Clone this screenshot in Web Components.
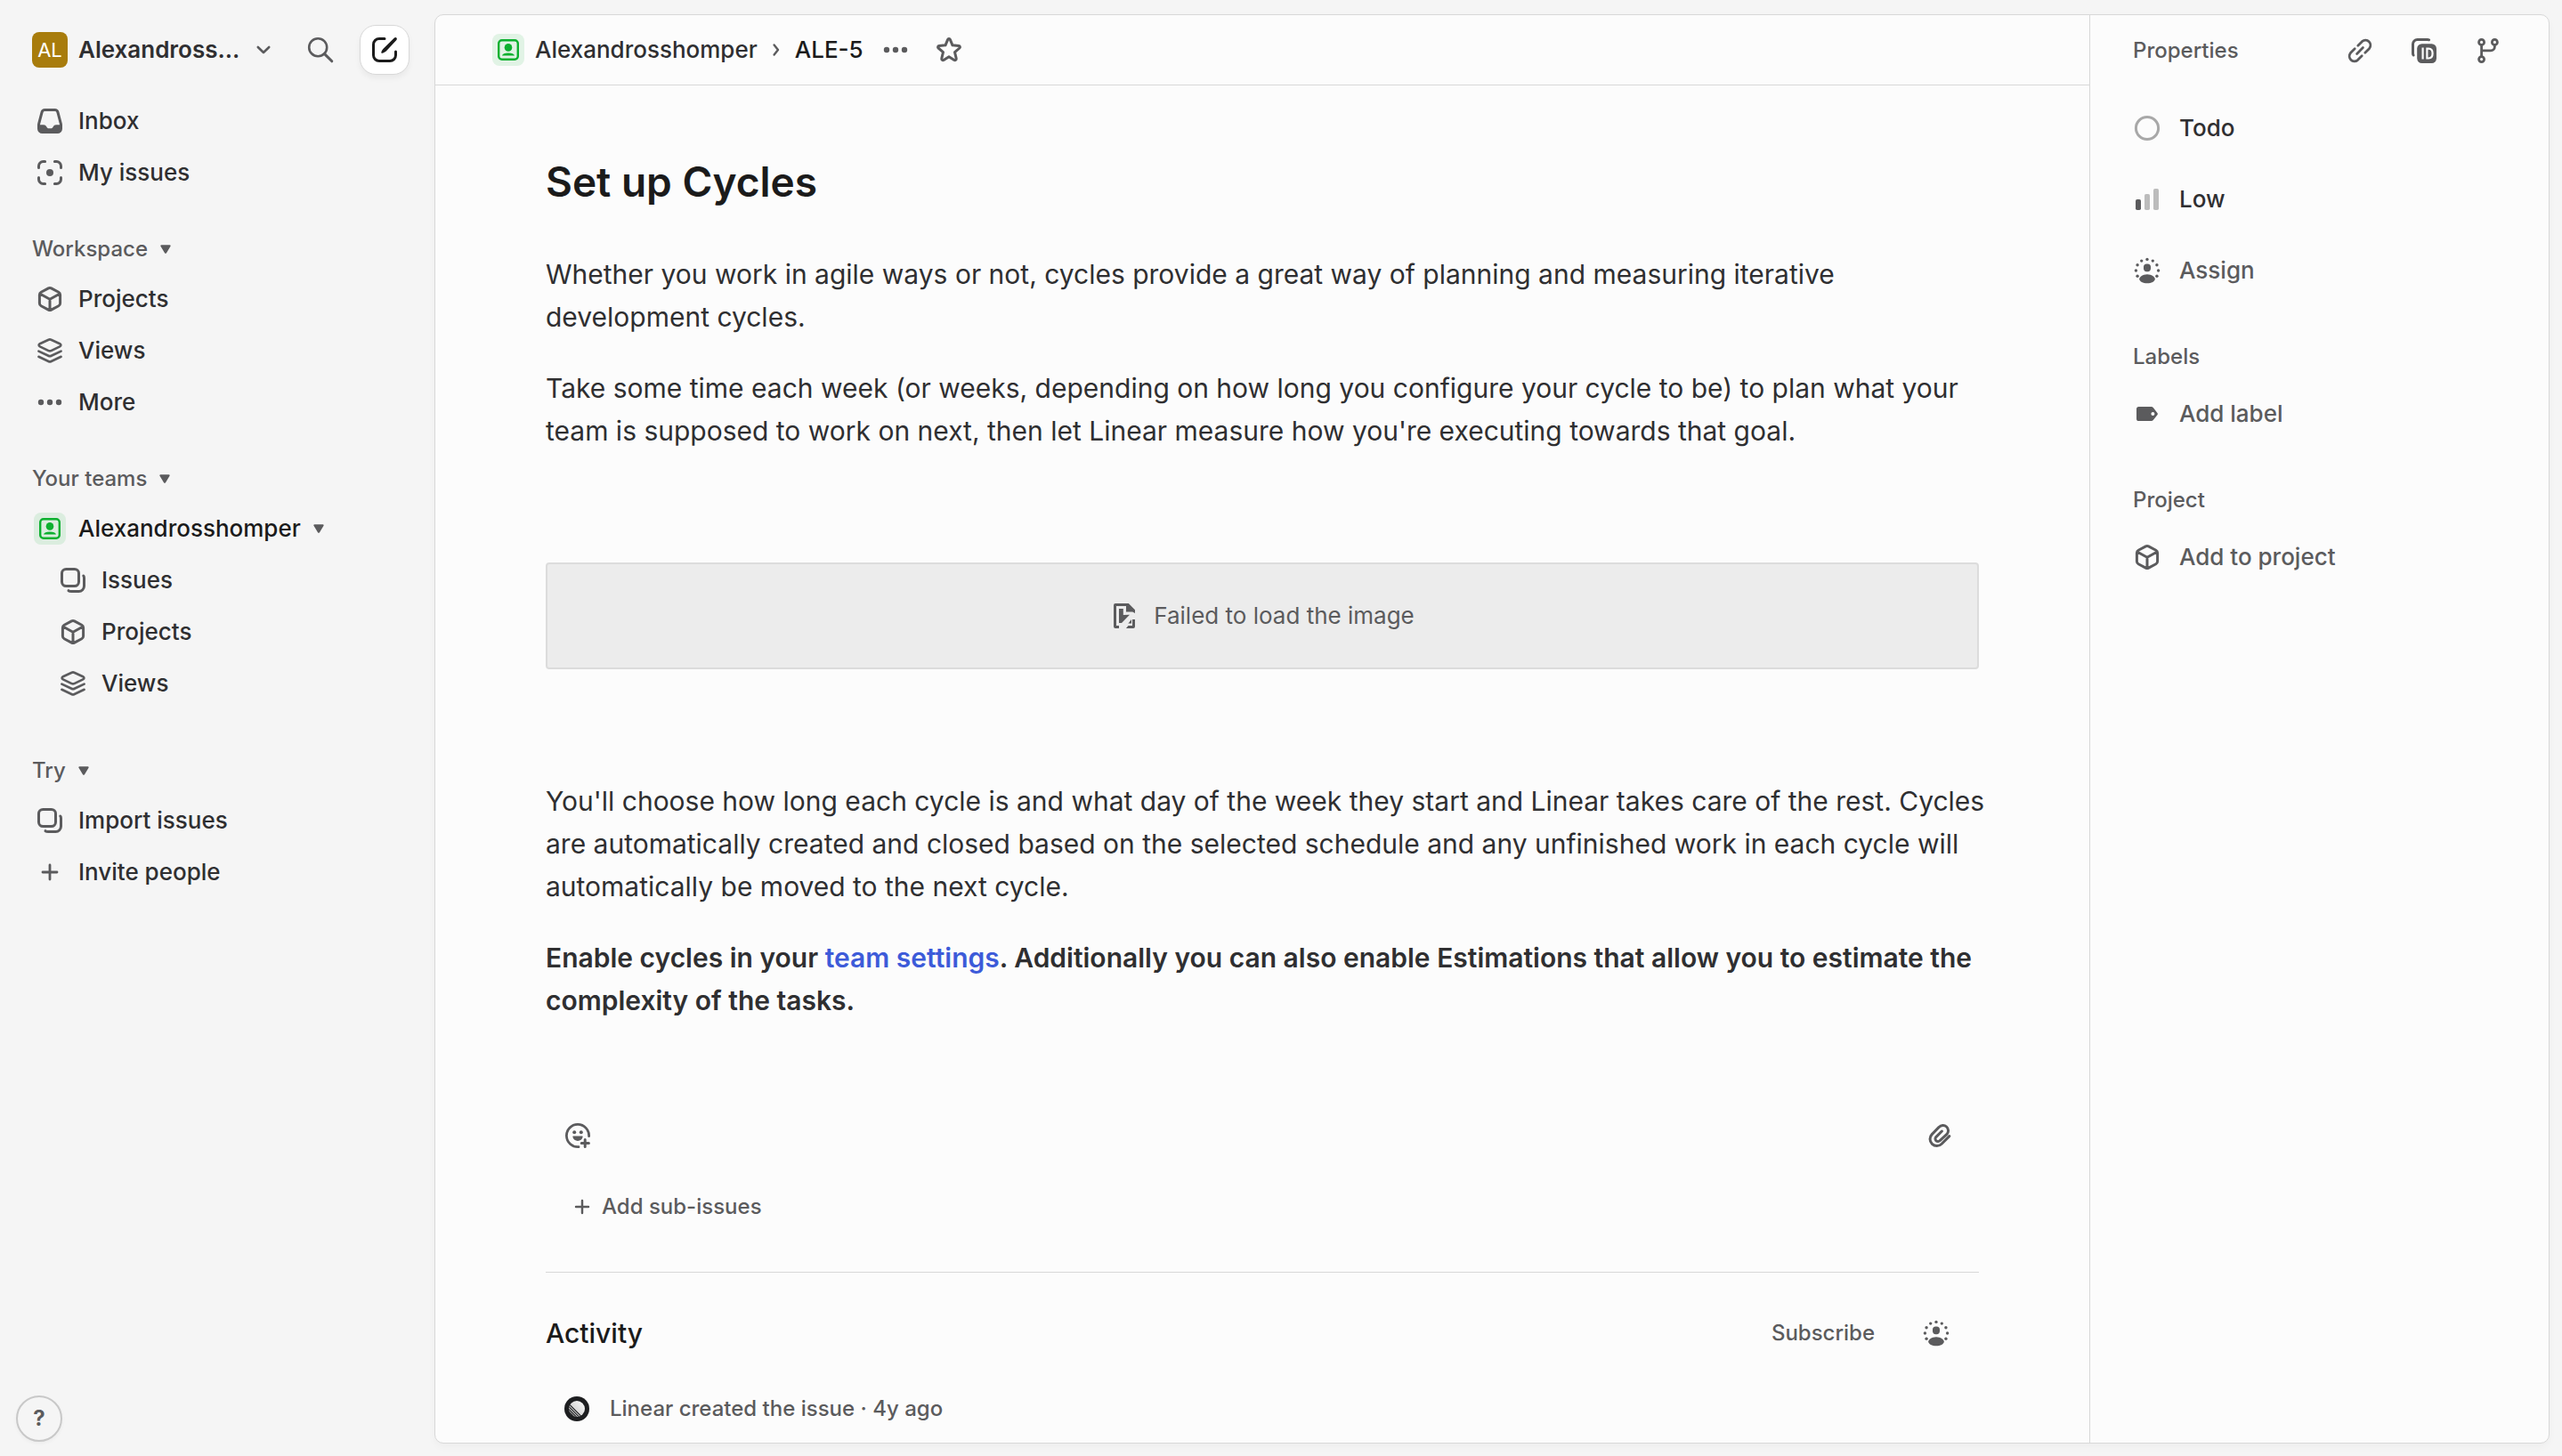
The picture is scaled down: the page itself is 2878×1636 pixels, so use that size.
<!DOCTYPE html>
<html lang="en">
<head>
<meta charset="utf-8">
<title>ALE-5 Set up Cycles</title>
<style>
  :root {
    --bg: #f5f5f5;
    --panel: #fcfcfc;
    --line: #d8d8d8;
    --ink: #1b1b1b;
    --text: #2f2f31;
    --muted: #5b5b5d;
    --link: #3d5bd9;
  }
  body {
    margin: 0;
    background: var(--bg);
    color: var(--text);
    font: 500 26px/32px Inter, "Liberation Sans", sans-serif;
    -webkit-font-smoothing: antialiased;
  }
  issue-text a { color: var(--link); text-decoration: none; }
  issue-text strong { font-weight: 600; }
</style>
</head>
<body>
<app-shell>
  <side-bar slot="sidebar">
    <nav-group>
      <nav-item icon="inbox">Inbox</nav-item>
      <nav-item icon="focus">My issues</nav-item>
    </nav-group>
    <nav-group heading="Workspace">
      <nav-item icon="cube">Projects</nav-item>
      <nav-item icon="layers">Views</nav-item>
      <nav-item icon="dots">More</nav-item>
    </nav-group>
    <nav-group heading="Your teams" class="teams">
      <nav-item icon="team" caret>Alexandrosshomper</nav-item>
      <nav-item icon="issues" nested>Issues</nav-item>
      <nav-item icon="cube" nested>Projects</nav-item>
      <nav-item icon="layers" nested>Views</nav-item>
    </nav-group>
    <nav-group heading="Try">
      <nav-item icon="issues">Import issues</nav-item>
      <nav-item icon="plus">Invite people</nav-item>
    </nav-group>
  </side-bar>
  <issue-view slot="main">
    <span slot="team">Alexandrosshomper</span>
    <span slot="id">ALE-5</span>
    <span slot="title">Set up Cycles</span>
    <issue-text>
      <p>Whether you work in agile ways or not, cycles provide a great way of planning and measuring iterative development cycles.</p>
      <p>Take some time each week (or weeks, depending on how long you configure your cycle to be) to plan what your team is supposed to work on next, then let Linear measure how you're executing towards that goal.</p>
    </issue-text>
    <image-error>Failed to load the image</image-error>
    <issue-text>
      <p>You'll choose how long each cycle is and what day of the week they start and Linear takes care of the rest. Cycles are automatically created and closed based on the selected schedule and any unfinished work in each cycle will automatically be moved to the next cycle.</p>
      <p><strong>Enable cycles in your <a href="#team-settings">team settings</a>. Additionally you can also enable Estimations that allow you to estimate the complexity of the tasks.</strong></p>
    </issue-text>
  </issue-view>
  <property-panel slot="aside">
    <property-group>
      <property-item icon="todo">Todo</property-item>
      <property-item icon="low">Low</property-item>
      <property-item icon="assign" empty>Assign</property-item>
    </property-group>
    <property-group heading="Labels">
      <property-item icon="tag" empty>Add label</property-item>
    </property-group>
    <property-group heading="Project">
      <property-item icon="cube" empty>Add to project</property-item>
    </property-group>
  </property-panel>
</app-shell>

<script>
const S = 'fill="none" stroke="currentColor" stroke-width="1.5" stroke-linecap="round" stroke-linejoin="round"';
const thin = w => S.replace('1.5', w);

/* dotted upper ring around a person */
const ring = [150, 180, 210, 240, 270, 300, 330, 0, 30].map(a => {
  const r = a * Math.PI / 180;
  return `<circle cx="${(8 + 6.3 * Math.cos(r)).toFixed(2)}" cy="${(8 + 6.3 * Math.sin(r)).toFixed(2)}" r=".85"/>`;
}).join('');

/* every icon is drawn on a 16-unit grid */
const ICONS = {
  inbox: `<path ${S} d="M5.2 1.75h5.6a1.7 1.7 0 0 1 1.65 1.25l1.7 6.4c.07.25.1.5.1.75v2.1a2 2 0 0 1-2 2h-8.5a2 2 0 0 1-2-2v-2.1c0-.25.03-.5.1-.75L3.55 3A1.7 1.7 0 0 1 5.2 1.75Z"/><path fill="currentColor" d="M1.4 10.1h3c1 0 1.3.4 1.7 1 .4.7.7 1 1.3 1h1.2c.6 0 .9-.3 1.3-1 .4-.6.7-1 1.7-1h3v2.4a2 2 0 0 1-2 2H3.4a2 2 0 0 1-2-2Z"/>`,
  focus: `<path ${S} d="M5.3 1.75H4.25a2.5 2.5 0 0 0-2.5 2.5V5.3M10.7 1.75h1.05a2.5 2.5 0 0 1 2.5 2.5V5.3M5.3 14.25H4.25a2.5 2.5 0 0 1-2.5-2.5V10.7M10.7 14.25h1.05a2.5 2.5 0 0 0 2.5-2.5V10.7"/><circle cx="8" cy="8" r="2" fill="currentColor"/>`,
  cube: `<path ${S} d="M7.2 1.95a1.7 1.7 0 0 1 1.6 0l4.1 2.2a1.7 1.7 0 0 1 .9 1.5v4.7a1.7 1.7 0 0 1-.9 1.5l-4.1 2.2a1.7 1.7 0 0 1-1.6 0l-4.1-2.2a1.7 1.7 0 0 1-.9-1.5v-4.7a1.7 1.7 0 0 1 .9-1.5ZM2.6 5.1 8 8.1l5.4-3M8 8.1v6"/>`,
  layers: `<path ${thin('1.3')} d="M7.3 1.85a1.7 1.7 0 0 1 1.4 0l4.9 2.25c.8.4.8 1.2 0 1.6L8.7 8.05a1.7 1.7 0 0 1-1.4 0L2.4 5.7c-.8-.4-.8-1.2 0-1.6ZM1.7 8.3l5.5 2.6a1.9 1.9 0 0 0 1.6 0l5.5-2.6M1.7 11.4l5.5 2.6a1.9 1.9 0 0 0 1.6 0l5.5-2.6"/>`,
  dots: `<g fill="currentColor"><circle cx="3" cy="8" r="1.6"/><circle cx="8" cy="8" r="1.6"/><circle cx="13" cy="8" r="1.6"/></g>`,
  team: `<rect x="-1" y="-1" width="18" height="18" rx="4" fill="#0cb02f" fill-opacity=".11"/><rect x="2.6" y="2.6" width="10.8" height="10.8" rx="1.8" fill="none" stroke="#0cb02f" stroke-width="1.2"/><circle cx="8" cy="6.7" r="2.15" fill="#0cb02f"/><path fill="#0cb02f" d="M4.5 11.3c.2-1 1.5-1.5 3.5-1.5s3.3.5 3.5 1.5Z"/>`,
  issues: `<rect ${S} x="1.75" y="1.75" width="9.5" height="9.5" rx="2.4"/><path ${S} d="M13.9 5.5c.25.3.35.7.35 1.2v4.6a2.95 2.95 0 0 1-2.95 2.95H7c-.7 0-1.1-.1-1.5-.4"/>`,
  plus: `<path ${thin('1.4')} d="M8 4v8M4 8h8"/>`,
  search: `<circle cx="6.6" cy="6.6" r="5" fill="none" stroke="currentColor" stroke-width="1.3"/><path d="m10.3 10.3 4.1 4.1" stroke="currentColor" stroke-width="1.5" stroke-linecap="round"/>`,
  compose: `<path ${S} d="M8 1.75H5a3.25 3.25 0 0 0-3.25 3.25v6A3.25 3.25 0 0 0 5 14.25h6A3.25 3.25 0 0 0 14.25 11V9"/><path fill="currentColor" d="M13.5 1.3c.4-.35.9-.35 1.2 0s.3.75 0 1.15L8.9 8.7c-.6.5-1.3.9-2 1.15-.6.2-.9-.1-.7-.7.25-.75.65-1.4 1.2-1.95Z"/>`,
  chevron: `<path ${thin('1.3')} d="M4.9 6.5 8 9.5l3.1-3"/>`,
  caret: `<path fill="currentColor" d="M5.7 5.6h4.6c.5 0 .7.4.45.8L8.5 10.1c-.25.4-.75.4-1 0L5.25 6.4c-.25-.4-.05-.8.45-.8Z"/>`,
  next: `<path ${thin('1.2')} d="M6.8 5.2 9 8l-2.2 2.8"/>`,
  star: `<path ${S} d="M7.35 2.15c.25-.6 1.05-.6 1.3 0L10 5.4l3.5.3c.7.05.95.85.45 1.3l-2.7 2.35.85 3.5c.15.7-.55 1.2-1.15.85L8 11.85 5.05 13.7c-.6.35-1.3-.15-1.15-.85l.85-3.5L2.05 7c-.5-.45-.25-1.25.45-1.3L6 5.4Z"/>`,
  link: `<path ${thin('1.4')} d="M6.9 5.1 9.3 2.7a2.85 2.85 0 0 1 4 4L10.9 9.1M9.1 10.9l-2.4 2.4a2.85 2.85 0 0 1-4-4L5.1 6.9M6.3 9.7l3.4-3.4"/>`,
  copyid: `<path ${S} d="M10.8 1.9a2 2 0 0 0-.8-.15H4.25a2.5 2.5 0 0 0-2.5 2.5V9.5c0 .5.1.7.3 1"/><rect x="4.1" y="4.1" width="10.9" height="10.9" rx="2.7" fill="currentColor"/><path fill="none" stroke="#fcfcfc" stroke-width="1.1" d="M7.3 6.3v6.5M9.7 6.85h.9c1.3 0 2.2.9 2.2 2.7s-.9 2.7-2.2 2.7h-.9Z"/>`,
  branch: `<g ${thin('1.4')}><circle cx="4.3" cy="3.2" r="1.5"/><circle cx="11.7" cy="3.2" r="1.5"/><circle cx="4.3" cy="12.8" r="1.5"/><path d="M4.3 4.8v6.4M11.7 4.8v.9a2.2 2.2 0 0 1-2.2 2.2H4.3"/></g>`,
  todo: `<circle cx="8" cy="8" r="6.3" fill="none" stroke="#a8a8a8" stroke-width="1.5"/>`,
  low: `<rect x="1.5" y="8" width="3" height="6" rx=".9" fill="currentColor"/><g fill="#bcbcbc"><rect x="6.5" y="5" width="3" height="9" rx=".9"/><rect x="11.5" y="2" width="3" height="12" rx=".9"/></g>`,
  assign: `<g fill="currentColor">${ring}<rect x="6" y="4.2" width="4" height="4.4" rx="1.8"/><path d="M8 10.1c2.5 0 4.3 1.4 4.4 2.6 0 1.3-2.1 2.4-4.4 2.4s-4.4-1.1-4.4-2.4c.1-1.2 1.9-2.6 4.4-2.6Z"/></g>`,
  tag: `<path fill="currentColor" fill-rule="evenodd" d="M3.3 4h7c.5 0 .9.2 1.2.6l2.2 2.9c.3.4.3.7 0 1.1l-2.2 2.8c-.3.4-.7.6-1.2.6h-7A1.3 1.3 0 0 1 2 10.7V5.3A1.3 1.3 0 0 1 3.3 4Zm7.9 3a1 1 0 1 0 0 2 1 1 0 0 0 0-2Z"/>`,
  emoji: `<path ${thin('1.4')} d="M14.3 8.3A6.3 6.3 0 1 0 8.5 14.3"/><g fill="currentColor"><circle cx="6.1" cy="6.1" r="1"/><circle cx="9.9" cy="6.1" r="1"/><path d="M5.7 8.2h4.6c.4 0 .6.2.5.6a2.9 2.9 0 0 1-5.6 0c-.1-.4.1-.6.5-.6Z"/></g><path ${S} d="M12.1 10.3v4M10.1 12.3h4.1"/>`,
  clip: `<path ${S} d="m13.4 8.3-4.3 4.3a3.75 3.75 0 0 1-5.5-5.3l4-4.1a2.9 2.9 0 0 1 4.4 4L8.1 10.8a1.45 1.45 0 0 1-2.2-2L9.2 5.5"/>`,
  broken: `<path fill="currentColor" d="M3 1h7.4L14 4.6V6.5L12.6 5.7H9V2.5H3.5V13.5H5V15H3a1 1 0 0 1-1-1V2a1 1 0 0 1 1-1ZM5 4h2.4v3.5L11 7.4 6.5 12H5ZM12.5 10H14v4a1 1 0 0 1-1 1H9l1.2-1.5h2.3Z"/><path fill="currentColor" d="m12 10-1.8 2.2H12Z"/>`
};

const make = (name, css, html) => customElements.define(name, class extends HTMLElement {
  constructor() {
    super();
    this.attachShadow({ mode: 'open' });
  }
  connectedCallback() {
    const t = document.createElement('template');
    t.innerHTML = `<style>:host,*{box-sizing:border-box}button{all:unset;box-sizing:border-box;cursor:pointer}a{color:inherit;text-decoration:none}h1,h2,h3{margin:0}${css}</style>` +
      (typeof html === 'function' ? html(this) : html);
    this.shadowRoot.replaceChildren(t.content.cloneNode(true));
  }
});

make('ui-icon',
  ':host{display:inline-flex;flex:none;width:32px;height:32px;color:var(--muted)}svg{width:100%;height:100%;overflow:visible}',
  el => `<svg viewBox="0 0 16 16" aria-hidden="true">${ICONS[el.getAttribute('name')]}</svg>`);

make('app-shell',
  `:host{display:flex;min-height:100vh}
   .side{flex:0 0 488px;display:flex}
   .panel{flex:1;min-width:0;display:flex;margin:16px 14px 14px 0;background:var(--panel);border:1px solid var(--line);border-radius:10px;box-shadow:0 4px 8px rgba(0,0,0,.03)}
   main{flex:1;min-width:0}
   aside{flex:0 0 516px;border-left:1px solid var(--line)}`,
  `<div class="side"><slot name="sidebar"></slot></div>
   <div class="panel"><main><slot name="main"></slot></main><aside><slot name="aside"></slot></aside></div>`);

make('side-bar',
  `:host{flex:1;display:flex;flex-direction:column;justify-content:space-between;padding:28px 28px 16px 0}
   header{display:flex;align-items:center;height:56px;margin-bottom:24px;padding-left:36px}
   .space{display:flex;align-items:center;flex:1;font-weight:600}
   .avatar{width:40px;height:40px;border-radius:8px;background:#a87c0c;color:#fff;font-size:22px;line-height:40px;font-weight:400;text-align:center;margin-right:12px}
   .space ui-icon{margin-left:auto;margin-right:32px}
   .search{display:flex;margin-right:28px}
   .new{display:flex;align-items:center;justify-content:center;width:56px;height:56px;border:1px solid var(--line);border-radius:18px;background:#fff;box-shadow:0 4px 6px rgba(0,0,0,.05)}
   .new ui-icon{color:var(--ink)}
   .help{margin-left:18px;width:52px;height:52px;border:2px solid #c8c8c8;border-radius:50%;text-align:center;line-height:48px;font-size:24px;font-weight:700;color:var(--muted);box-shadow:0 2px 4px rgba(0,0,0,.04)}`,
  `<div><header>
     <button class="space"><span class="avatar">AL</span><span>Alexandross...</span><ui-icon name="chevron"></ui-icon></button>
     <button class="search" aria-label="Search"><ui-icon name="search"></ui-icon></button>
     <button class="new" aria-label="New issue"><ui-icon name="compose"></ui-icon></button>
   </header><nav><slot></slot></nav></div>
   <button class="help">?</button>`);

make('nav-group',
  `:host{display:block;margin-bottom:34px}
   :host(.teams){margin-bottom:46px}
   .head{display:flex;align-items:center;height:48px;margin-bottom:4px;padding-left:36px;font-size:24px;color:var(--muted)}
   .head ui-icon{margin-left:4px}
   .list{display:flex;flex-direction:column;gap:2px}`,
  el => (el.hasAttribute('heading') ? `<button class="head">${el.getAttribute('heading')}<ui-icon name="caret"></ui-icon></button>` : '') +
    `<div class="list"><slot></slot></div>`);

make('nav-item',
  `:host{display:block}
   a{display:flex;align-items:center;height:56px;padding-left:40px}
   a>ui-icon:first-child{margin-right:16px}
   :host([nested]) a{padding-left:66px}
   :host([caret]) a{color:var(--ink)}
   .caret{margin-left:4px}`,
  el => `<a href="#"><ui-icon name="${el.getAttribute('icon')}"></ui-icon><slot></slot>${el.hasAttribute('caret') ? '<ui-icon class="caret" name="caret"></ui-icon>' : ''}</a>`);

make('issue-view',
  `:host{display:block}
   header{display:flex;align-items:center;height:79px;padding-left:66px;border-bottom:1px solid var(--line)}
   header a{display:flex;align-items:center;gap:14px}
   header button{display:flex}
   .id{color:var(--ink);margin-right:20px}
   .next{margin:0 5px}
   .star{margin-left:28px}
   article{padding:76px 124px 8px}
   h1{font-size:46px;line-height:64px;font-weight:600;color:var(--ink);margin-bottom:48px}
   .tools{display:flex;justify-content:space-between;align-items:center;height:56px;margin:100px 28px 24px 20px}
   .tools button{display:flex}
   .sub{display:flex;align-items:center;gap:8px;height:56px;margin-left:27px;font-size:24px;color:var(--muted)}
   .sub ui-icon{width:28px;height:28px}
   .act{display:flex;align-items:center;height:56px}
   section{margin-top:45px;border-top:1px solid var(--line);padding-top:40px}
   h2{flex:1;font-size:30px;line-height:40px;font-weight:500;color:var(--ink)}
   .subscribe{font-size:24px;color:var(--muted);margin-right:53px}
   .who{display:flex;margin-right:32px}
   .event{display:flex;align-items:center;gap:23px;height:56px;margin-top:29px;padding-left:21px;font-size:24px;color:var(--muted);font-weight:450}
   .event b{font-weight:500}
   .event svg{width:28px;height:28px}`,
  `<header>
     <a href="#"><ui-icon name="team"></ui-icon><slot name="team"></slot></a>
     <ui-icon class="next" name="next"></ui-icon>
     <span class="id"><slot name="id"></slot></span>
     <button aria-label="Issue options"><ui-icon name="dots"></ui-icon></button>
     <button class="star" aria-label="Favorite"><ui-icon name="star"></ui-icon></button>
   </header>
   <article>
     <h1><slot name="title"></slot></h1>
     <slot></slot>
     <div class="tools">
       <button aria-label="Add reaction"><ui-icon name="emoji"></ui-icon></button>
       <button aria-label="Attach file"><ui-icon name="clip"></ui-icon></button>
     </div>
     <button class="sub"><ui-icon name="plus"></ui-icon>Add sub-issues</button>
     <section>
       <div class="act"><h2>Activity</h2>
         <button class="subscribe">Subscribe</button>
         <button class="who" aria-label="Subscribers"><ui-icon name="assign"></ui-icon></button>
       </div>
       <div class="event">
         <svg viewBox="0 0 28 28" aria-hidden="true">
           <defs><linearGradient id="g" x1="1" y1="0" x2="0" y2="1"><stop offset="0" stop-color="#fff"/><stop offset="1" stop-color="#bbb"/></linearGradient>
           <clipPath id="c"><circle cx="14" cy="14" r="9"/></clipPath></defs>
           <circle cx="14" cy="14" r="14" fill="#1d1e20"/>
           <circle cx="14" cy="14" r="9" fill="url(#g)"/>
           <path clip-path="url(#c)" stroke="#1d1e20" stroke-width="1.1" d="m5 8.5 15 15M4 10.5l14 14M3 12.5l14 14M3 15l14 14"/>
         </svg>
         <span><b>Linear</b> created the issue · 4y ago</span>
       </div>
     </section>
   </article>`);

/* running text hangs slightly past the block edge on the right */
make('issue-text',
  `:host{display:block;margin-right:-10px;font-size:30px;line-height:48px;font-weight:400}
   ::slotted(p){margin:0 0 32px}
   ::slotted(p:last-child){margin:0}`,
  '<slot></slot>');

make('image-error',
  `:host{display:flex;align-items:center;justify-content:center;gap:17px;height:120px;margin:124px 0;border:2px solid #dcdcdc;border-radius:4px;background:#ececec;color:var(--muted);font-weight:400}`,
  '<ui-icon name="broken"></ui-icon><slot></slot>');

make('property-panel',
  `:host{display:block;padding:0 52px 0 48px}
   header{display:flex;align-items:center;height:80px;margin-bottom:19px}
   h2{flex:1;font-size:24px;line-height:32px;font-weight:500;color:var(--muted)}
   .actions{display:flex;gap:40px}
   .actions button{display:flex}`,
  `<header><h2>Properties</h2><div class="actions">
     <button aria-label="Copy issue link"><ui-icon name="link"></ui-icon></button>
     <button aria-label="Copy issue ID"><ui-icon name="copyid"></ui-icon></button>
     <button aria-label="Copy branch name"><ui-icon name="branch"></ui-icon></button>
   </div></header><slot></slot>`);

make('property-group',
  `:host{display:block;margin-bottom:53px}
   h3{font-size:24px;line-height:32px;font-weight:500;color:var(--muted);margin-bottom:20px}
   div{display:flex;flex-direction:column;gap:24px}`,
  el => (el.hasAttribute('heading') ? `<h3>${el.getAttribute('heading')}</h3>` : '') + '<div><slot></slot></div>');

make('property-item',
  `:host{display:block}
   button{display:flex;align-items:center;gap:20px;height:56px}
   :host([empty]) button{color:var(--muted)}`,
  el => `<button><ui-icon name="${el.getAttribute('icon')}"></ui-icon><slot></slot></button>`);
</script>
</body>
</html>
